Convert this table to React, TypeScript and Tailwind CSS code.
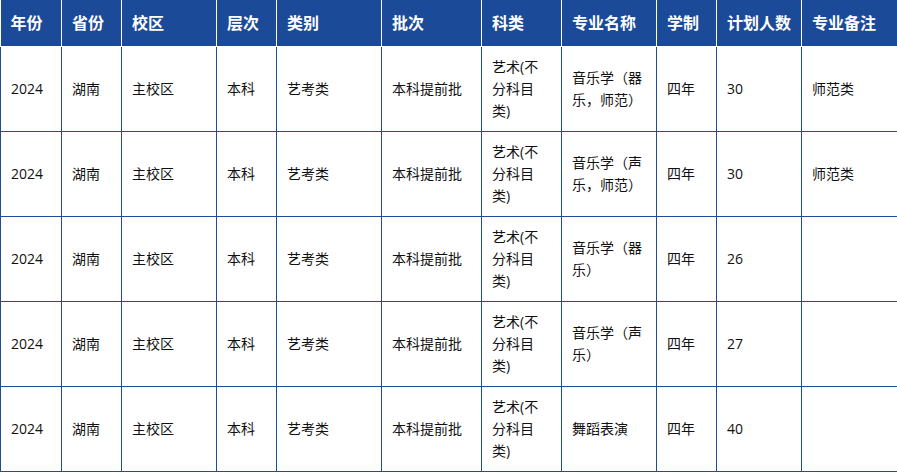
const headers = ['年份', '省份', '校区', '层次', '类别', '批次', '科类', '专业名称', '学制', '计划人数', '专业备注']

const colWidths = ['w-[61px]', 'w-[60px]', 'w-[95px]', 'w-[60px]', 'w-[105px]', 'w-[100px]', 'w-[80px]', 'w-[95px]', 'w-[60px]', 'w-[85px]', 'w-[96px]']

// 专业名称 已按原表换行
const rows = [
  { major: ['音乐学（器', '乐，师范）'], count: '30', note: '师范类' },
  { major: ['音乐学（声', '乐，师范）'], count: '30', note: '师范类' },
  { major: ['音乐学（器', '乐）'], count: '26', note: '' },
  { major: ['音乐学（声', '乐）'], count: '27', note: '' },
  { major: ['舞蹈表演'], count: '40', note: '' },
]

function Lines({ items }: { items: string[] }) {
  return (
    <>
      {items.map((t, i) => (
        <span key={i} className="block">
          {t}
        </span>
      ))}
    </>
  )
}

export default function App() {
  const td = 'border border-[#1d4c99] px-[10px] py-[9px] align-middle'

  return (
    <div
      className="w-[897px] h-[474px] overflow-hidden bg-white"
      style={{ fontFamily: '"Open Sans", "Noto Sans CJK SC", sans-serif' }}
    >
      <table className="w-[897px] table-fixed border-collapse text-left">
        <colgroup>
          {colWidths.map((w, i) => (
            <col key={i} className={w} />
          ))}
        </colgroup>
        <thead>
          <tr className="bg-[#1b4a98]">
            {headers.map((h) => (
              <th
                key={h}
                className="border border-white border-t-0 first:border-l-0 last:border-r-0 px-[10px] py-[12px] text-[16px] leading-[22px] font-bold text-white whitespace-nowrap"
              >
                {h}
              </th>
            ))}
          </tr>
        </thead>
        <tbody className="text-[14px] leading-[22px] text-[#111]">
          {rows.map((r, i) => (
            <tr key={i}>
              <td className={td}>2024</td>
              <td className={td}>湖南</td>
              <td className={td}>主校区</td>
              <td className={td}>本科</td>
              <td className={td}>艺考类</td>
              <td className={td}>本科提前批</td>
              <td className={td}>
                <Lines items={['艺术(不', '分科目', '类)']} />
              </td>
              <td className={td}>
                <Lines items={r.major} />
              </td>
              <td className={td}>四年</td>
              <td className={td}>{r.count}</td>
              <td className={td}>{r.note}</td>
            </tr>
          ))}
        </tbody>
      </table>
    </div>
  )
}
